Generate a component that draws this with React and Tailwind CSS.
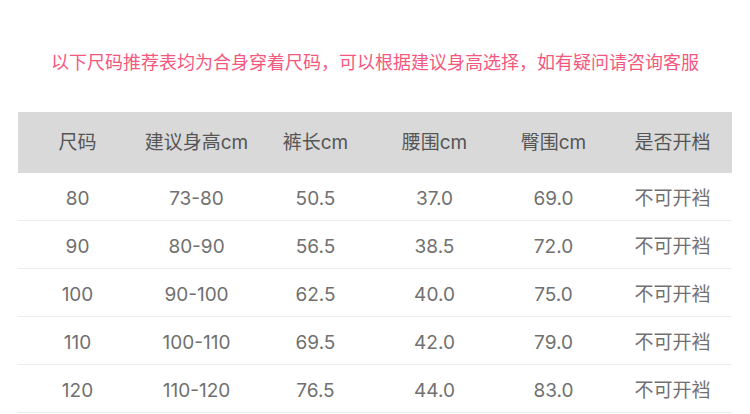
import React from 'react';

const headers = ['尺码', '建议身高cm', '裤长cm', '腰围cm', '臀围cm', '是否开档'];

const rows = [
  ['80', '73-80', '50.5', '37.0', '69.0', '不可开裆'],
  ['90', '80-90', '56.5', '38.5', '72.0', '不可开裆'],
  ['100', '90-100', '62.5', '40.0', '75.0', '不可开裆'],
  ['110', '100-110', '69.5', '42.0', '79.0', '不可开裆'],
  ['120', '110-120', '76.5', '44.0', '83.0', '不可开裆'],
];

const App = () => {
  return (
    <div
      className="w-[750px] h-[414px] bg-white overflow-hidden"
      style={{ fontFamily: 'Inter, "Noto Sans CJK SC", sans-serif' }}
    >
      {/* notice */}
      <p className="pt-[49px] h-[112px] text-center text-[18px] leading-[28px] text-[#f5587e]">
        以下尺码推荐表均为合身穿着尺码，可以根据建议身高选择，如有疑问请咨询客服
      </p>

      {/* size table */}
      <div className="mx-[18px]">
        <div className="grid grid-cols-6 h-[61px] items-center pt-[1px] bg-[#d9d9d9] text-[19px] text-[#555]">
          {headers.map((h) => (
            <div key={h} className="text-center">{h}</div>
          ))}
        </div>
        {rows.map((row) => (
          <div
            key={row[0]}
            className="grid grid-cols-6 h-[48px] items-center pt-[5px] border-b border-[#ececec] text-[19px] text-[#707070]"
          >
            {row.map((cell, i) => (
              <div key={i} className="text-center">{cell}</div>
            ))}
          </div>
        ))}
      </div>
    </div>
  );
};

export default App;
